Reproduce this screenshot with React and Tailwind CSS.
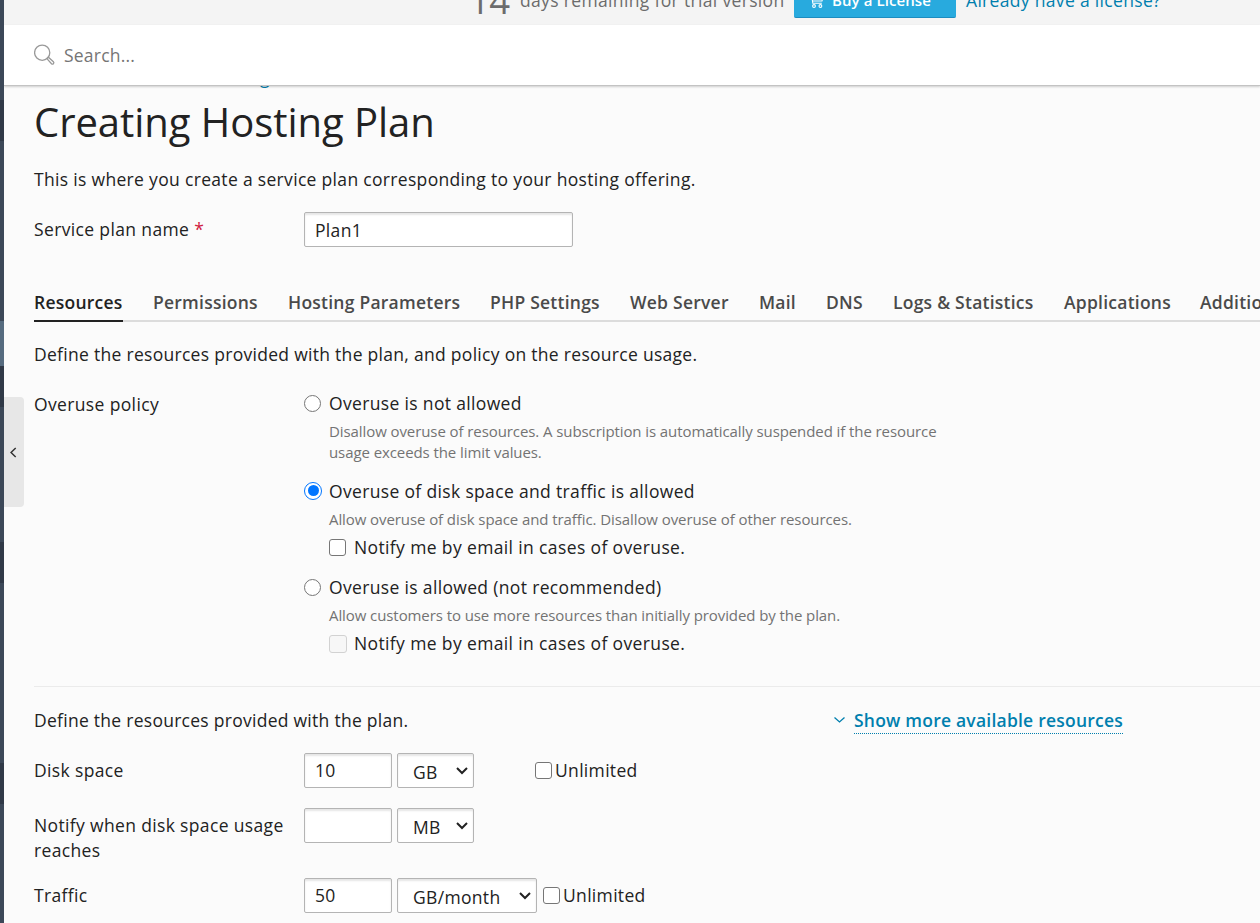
const TABS = [
  ["Resources", "w-[89px]"],
  ["Permissions", "w-[105px]"],
  ["Hosting Parameters", "w-[172px]"],
  ["PHP Settings", "w-[110px]"],
  ["Web Server", "w-[99px]"],
  ["Mail", "w-[37px]"],
  ["DNS", "w-[37px]"],
  ["Logs & Statistics", "w-[141px]"],
  ["Applications", "w-[106px]"],
  ["Additional Services", "w-[180px]"],
];

const FIELD =
  "h-[35px] shrink-0 rounded-[2px] border border-[#b4b4b4] bg-white shadow-[inset_0_2px_2px_rgba(0,0,0,0.10)] outline-none";

function SideStrip() {
  return (
    <div className="flex w-1 shrink-0 flex-col bg-[#3c4858]">
      <div className="mt-[100px] h-[41px] bg-[#303947]" />
      <div className="mt-[180px] h-[45px] bg-[#566b7f]" />
      <div className="h-[41px] bg-[#303947]" />
      <div className="mt-[135px] h-[41px] bg-[#303947]" />
      <div className="mt-[180px] h-[41px] bg-[#303947]" />
    </div>
  );
}

function CartIcon() {
  return (
    <svg width="15" height="15" viewBox="0 0 15 15" fill="none" stroke="white" strokeWidth="1.1" className="shrink-0">
      <path d="M0 1h2.5l1.3 9.3h9M3 4h11l-1 4H3.6" />
      <circle cx="5" cy="13" r="1.4" />
      <circle cx="11.4" cy="13" r="1.4" />
    </svg>
  );
}

function SearchIcon() {
  return (
    <svg width="22" height="22" viewBox="0 0 22 22" fill="none" stroke="#999" strokeWidth="1.3" className="shrink-0">
      <circle cx="8.2" cy="8.7" r="7.6" />
      <path d="M12.9 14.6l1.5-1.4 5 4.6a1.3 1.3 0 0 1-1.9 1.9z" />
    </svg>
  );
}

function Radio({ checked }) {
  return checked ? (
    <span className="mb-[2px] flex size-[18px] shrink-0 items-center justify-center rounded-full border-[1.5px] border-[#0075ff] bg-white">
      <span className="size-[11px] rounded-full bg-[#0075ff]" />
    </span>
  ) : (
    <span className="mb-px mr-px size-[17px] shrink-0 rounded-full border border-[#767676] bg-white" />
  );
}

function Check({ disabled }) {
  return (
    <span
      className={
        disabled
          ? "size-[18px] shrink-0 rounded-[3px] border border-[#d2d2d2] bg-[#f7f7f7]"
          : "size-[17px] shrink-0 rounded-[3px] border border-[#767676] bg-white"
      }
    />
  );
}

function Option({ checked, label, hint, children, className }) {
  return (
    <div className={className}>
      <label className="flex h-[25px] items-center gap-[7px]">
        <Radio checked={checked} />
        <span className="whitespace-nowrap tracking-[0.34px]">{label}</span>
      </label>
      <div className="ml-[25px] mt-[5px] w-[620px] whitespace-pre-line text-[15px] leading-[21px] tracking-[-0.085px] text-[#737373]">{hint}</div>
      {children}
    </div>
  );
}

function Notify({ disabled }) {
  return (
    <label className="ml-[25px] mt-[5px] flex h-[25px] items-center tracking-[0.37px]">
      <Check disabled={disabled} />
      <span className={disabled ? "ml-[7px]" : "ml-2"}>Notify me by email in cases of overuse.</span>
    </label>
  );
}

function Unit({ text, width }) {
  return (
    <div className={`${FIELD} ${width} ml-[5px] flex items-center justify-between pl-[15px] pr-[5px]`}>
      <span className="pt-[3px]">{text}</span>
      <svg width="12" height="8" viewBox="0 0 12 8" fill="none" stroke="#222" strokeWidth="2">
        <path d="M1 1l5 5 5-5" />
      </svg>
    </div>
  );
}

function ResourceRow({ label, value, unit, width, unlimited, className }) {
  return (
    <div className={`flex ${className ?? ""}`}>
      <div className="w-[270px] shrink-0 pt-[5px] leading-[25px] tracking-[0.35px]">{label}</div>
      <input className={`${FIELD} w-[88px] px-[10px] pb-[2px]`} defaultValue={value} />
      <Unit text={unit} width={width} />
      {unlimited && (
        <label className={`flex h-[35px] items-center gap-[3px] ${unlimited}`}>
          <Check />
          <span>Unlimited</span>
        </label>
      )}
    </div>
  );
}

export default function App() {
  return (
    <div className="flex h-[923px] w-[1260px] overflow-hidden bg-[#fbfbfb] font-['Open_Sans',sans-serif] text-[17.5px] leading-[25px] tracking-[0.32px] text-[#222]">
      <SideStrip />
      <div className="relative flex w-[1256px] shrink-0 flex-col overflow-hidden">
        <div className="flex h-[25px] shrink-0 items-end overflow-hidden bg-[#f4f4f4] pl-[465px] text-[#6c6c6c]">
          <div className="mb-[6px] w-[51px] text-[36.5px] leading-[38px] tracking-[-0.5px]">14</div>
          <div className="mb-[12px] w-[274px] whitespace-nowrap tracking-[0.34px]">days remaining for trial version</div>
          <div className="mb-[7px] flex h-[35px] w-[162px] items-center rounded-[2px] border-b border-[#1c8cc0] bg-[#28aade] pl-[15px] text-[15px] font-semibold tracking-[0.08px] text-white">
            <CartIcon />
            <span className="ml-2 whitespace-nowrap">Buy a License</span>
          </div>
          <div className="mb-[12px] ml-[10px] whitespace-nowrap text-[#007fae]">Already have a license?</div>
        </div>
        <div className="z-10 flex h-[61px] shrink-0 items-center border-b border-[#c3c3c3] bg-white pl-[30px] text-[#757575] shadow-[0_1px_2px_rgba(0,0,0,0.18)]">
          <SearchIcon />
          <span className="ml-2 tracking-[0.22px]">Search...</span>
        </div>
        <div className="absolute left-[256px] top-[65px] text-[#007fae]">g</div>

        <div className="flex w-[1300px] flex-col pl-[30px]">
          <h1 className="mt-[11px] h-[50px] whitespace-nowrap text-[40px] leading-[50px] tracking-[-0.05px]">Creating Hosting Plan</h1>
          <p className="mt-[20px]">This is where you create a service plan corresponding to your hosting offering.</p>
          <div className="mt-5 flex">
            <div className="w-[270px] pt-[5px] tracking-[0.36px]">
              Service plan name <span className="text-[#d0213f]">*</span>
            </div>
            <input className={`${FIELD} w-[269px] px-[10px]`} defaultValue="Plan1" />
          </div>

          <div className="mt-[40px] flex h-[35px] gap-[30px] border-b-2 border-[#dcdcdc] font-semibold tracking-[0.24px] text-[#4a4a4a]">
            {TABS.map(([name, width], i) => (
              <div
                key={name}
                className={`${width} h-[35px] shrink-0 whitespace-nowrap pt-[3px] ${i === 0 ? "border-b-2 border-[#222] text-[#222]" : ""}`}
              >
                {name}
              </div>
            ))}
          </div>

          <p className="mt-5 tracking-[0.29px]">Define the resources provided with the plan, and policy on the resource usage.</p>

          <div className="mt-[24px] flex">
            <div className="w-[270px] pt-px tracking-[0.36px]">Overuse policy</div>
            <div>
              <Option
                label="Overuse is not allowed"
                hint={"Disallow overuse of resources. A subscription is automatically suspended if the resource\nusage exceeds the limit values."}
              />
              <Option
                className="mt-4"
                checked
                label="Overuse of disk space and traffic is allowed"
                hint="Allow overuse of disk space and traffic. Disallow overuse of other resources."
              >
                <Notify />
              </Option>
              <Option
                className="mt-[15px]"
                label="Overuse is allowed (not recommended)"
                hint="Allow customers to use more resources than initially provided by the plan."
              >
                <Notify disabled />
              </Option>
            </div>
          </div>

          <div className="mt-[30px] border-t border-[#ebebeb]" />
          <div className="mt-[21px] flex h-[27px]">
            <div className="w-[800px] tracking-[0.27px]">Define the resources provided with the plan.</div>
            <svg width="11" height="8" viewBox="0 0 11 8" fill="none" stroke="#007fae" strokeWidth="1.3" className="mt-2 shrink-0">
              <path d="M.5 1.5l5 4.5 5-4.5" />
            </svg>
            <span className="ml-[9px] h-[26px] w-[269px] whitespace-nowrap border-b border-dotted border-[#007fae] font-semibold tracking-[0.22px] text-[#007fae]">
              Show more available resources
            </span>
          </div>

          <ResourceRow className="mt-[18px] h-[55px]" label="Disk space" value="10" unit="GB" width="w-[77px]" unlimited="ml-[61px]" />
          <ResourceRow className="h-[70px]" label="Notify when disk space usage reaches" value="" unit="MB" width="w-[77px]" />
          <ResourceRow label="Traffic" value="50" unit="GB/month" width="w-[140px]" unlimited="ml-[6px]" />
        </div>

        <div className="absolute left-0 top-[397px] flex h-[110px] w-5 items-center rounded-r-[4px] bg-[#e7e7e7] pl-[6px]">
          <svg width="7" height="11" viewBox="0 0 7 11" fill="none" stroke="#333" strokeWidth="1.5">
            <path d="M5.7 1L1 5.5 5.7 10" />
          </svg>
        </div>
      </div>
    </div>
  );
}
